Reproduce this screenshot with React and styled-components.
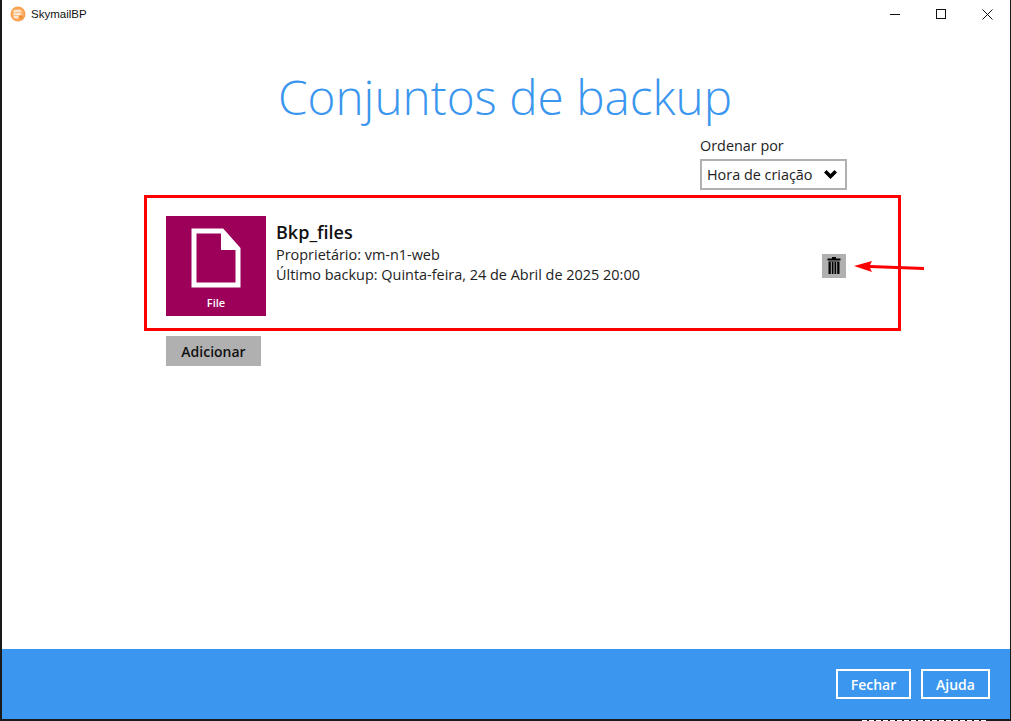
import React from "react";
import styled, { createGlobalStyle } from "styled-components";

const GlobalStyle = createGlobalStyle`
  html, body {
    margin: 0;
    padding: 0;
    background: #fff;
  }
  * {
    box-sizing: border-box;
  }
`;

const Win = styled.div`
  width: 1011px;
  height: 721px;
  display: flex;
  flex-direction: column;
  background: #fff;
  border-left: 2px solid #1a1a1a;
  border-right: 1px solid #1a1a1a;
  border-bottom: 2px solid #1a1a1a;
  font-family: "Open Sans", sans-serif;
  color: #222;
`;

const TitleBar = styled.div`
  height: 28px;
  flex: none;
  display: flex;
  align-items: center;
  padding-left: 8px;
  font-family: "Liberation Sans", sans-serif;
  font-size: 11.5px;
  color: #111;
`;

const AppName = styled.span`
  margin-left: 5px;
  flex: 1;
`;

const WinButton = styled.div`
  width: 46px;
  height: 28px;
  display: flex;
  align-items: center;
  justify-content: center;
`;

const Main = styled.div`
  flex: 1;
  display: flex;
  flex-direction: column;
  padding: 0 108px 0 142px;
  position: relative;
`;

const Title = styled.h1`
  margin: 34px 0 0 -142px;
  width: 1006px;
  text-align: center;
  font-size: 47.7px;
  line-height: 70px;
  font-weight: 300;
  color: #3a96ee;
`;

const SortBlock = styled.div`
  align-self: flex-end;
  width: 147px;
  margin: 4px 55px 0 0;
`;

const SortLabel = styled.div`
  font-size: 14.4px;
  line-height: 19px;
`;

const Select = styled.div`
  margin-top: 4px;
  height: 31px;
  border: 2px solid #b0b0b0;
  display: flex;
  align-items: center;
  justify-content: space-between;
  padding: 0 8px 0 5px;
  font-size: 14.4px;
`;

const SetCard = styled.div`
  width: 757px;
  height: 136px;
  margin-top: 5px;
  border: 3px solid #fe0000;
  display: flex;
  align-items: center;
  padding: 6px 19px 0;
`;

const TypeTile = styled.div`
  width: 100px;
  height: 100px;
  flex: none;
  background: #9c0059;
  display: flex;
  flex-direction: column;
  align-items: center;
  padding-top: 12px;
  color: #fff;
  font-size: 11px;
  font-weight: 600;
`;

const TileLabel = styled.div`
  margin-top: 8px;
  line-height: 14px;
`;

const SetInfo = styled.div`
  margin-left: 10px;
  flex: 1;
  align-self: flex-start;
  padding-top: 16px;
`;

const SetName = styled.div`
  font-size: 18px;
  font-weight: 600;
  line-height: 24px;
  margin-bottom: 1px;
  color: #111;
`;

const SetLine = styled.div`
  font-size: 14.45px;
  line-height: 20px;
`;

const TrashButton = styled.div`
  width: 24px;
  height: 24px;
  margin-right: 33px;
  margin-top: -1px;
  background: #b0b0b0;
  display: flex;
  align-items: center;
  justify-content: center;
`;

const AddButton = styled.div`
  width: 95px;
  height: 30px;
  margin: 5px 0 0 22px;
  background: #b0b0b0;
  display: flex;
  align-items: center;
  justify-content: center;
  font-size: 14px;
  font-weight: 600;
  color: #111;
`;

const Arrow = styled.svg`
  position: absolute;
  left: 852px;
  top: 230px;
`;

const Footer = styled.div`
  height: 70px;
  flex: none;
  background: #3a96ee;
  display: flex;
  align-items: flex-start;
  justify-content: flex-end;
  gap: 10px;
  padding: 20px 20px 0 0;
  position: relative;
  /* bits of a window behind, showing through on the last pixel row */
  &::after {
    content: "";
    position: absolute;
    left: 860px;
    top: 71px;
    width: 125px;
    height: 1px;
    background: repeating-linear-gradient(90deg, #fff 0 5px, #1a1a1a 5px 7px);
  }
`;

const FooterButton = styled.div`
  width: ${(p) => p.$w}px;
  height: 30px;
  border: 2px solid #fff;
  display: flex;
  align-items: center;
  justify-content: center;
  color: #fff;
  font-size: 14px;
  font-weight: 600;
`;

const AppIcon = () => (
  <svg width="16" height="16" viewBox="0 0 16 16">
    <circle cx="8" cy="8" r="7.5" fill="#f9a04c" />
    <circle cx="8" cy="8" r="5.6" fill="#fbb678" />
    <rect x="3.5" y="4" width="7.5" height="2.2" rx="0.8" fill="#fde6d0" />
    <rect x="3.5" y="7" width="7.5" height="2.2" rx="0.8" fill="#fde6d0" />
    <rect x="3.5" y="10" width="5" height="2.2" rx="0.8" fill="#fde6d0" />
    <rect x="9" y="9.5" width="3.5" height="3" rx="0.6" fill="#ef8a2e" />
  </svg>
);

const FileIcon = () => (
  <svg width="50" height="60" viewBox="0 0 50 60">
    <path d="M3 3H31L47 21V57H3Z" fill="none" stroke="#fff" strokeWidth="5" />
    <path d="M30 2V22H48V19L33 2Z" fill="#fff" />
  </svg>
);

const TrashIcon = () => (
  <svg width="14" height="17" viewBox="0 0 14 17">
    <path d="M5 0H9V1.5H13.5V3.5H.5V1.5H5Z M1.5 4.5H12.5V17H1.5Z" fill="#000" />
    <path d="M4.3 5V17M7 5V17M9.7 5V17" stroke="#b0b0b0" strokeWidth="1" />
  </svg>
);

const App = () => {
  return (
    <>
      <GlobalStyle />
      <Win>
        <TitleBar>
          <AppIcon />
          <AppName>SkymailBP</AppName>
          <WinButton>
            <svg width="10" height="10" viewBox="0 0 10 10">
              <path d="M0 5.5H10" stroke="#111" />
            </svg>
          </WinButton>
          <WinButton>
            <svg width="10" height="10" viewBox="0 0 10 10">
              <rect x="0.5" y="0.5" width="9" height="9" fill="none" stroke="#111" />
            </svg>
          </WinButton>
          <WinButton>
            <svg width="11" height="11" viewBox="0 0 11 11">
              <path d="M.5 .5L10.5 10.5M10.5 .5L.5 10.5" stroke="#111" />
            </svg>
          </WinButton>
        </TitleBar>
        <Main>
          <Title>Conjuntos de backup</Title>
          <SortBlock>
            <SortLabel>Ordenar por</SortLabel>
            <Select>
              Hora de criação
              <svg width="13" height="9" viewBox="0 0 13 9">
                <path d="M0 2.5L2.5 0L6.5 4L10.5 0L13 2.5L6.5 9Z" fill="#000" />
              </svg>
            </Select>
          </SortBlock>
          <SetCard>
            <TypeTile>
              <FileIcon />
              <TileLabel>File</TileLabel>
            </TypeTile>
            <SetInfo>
              <SetName>Bkp_files</SetName>
              <SetLine>Proprietário: vm-n1-web</SetLine>
              <SetLine>Último backup: Quinta-feira, 24 de Abril de 2025 20:00</SetLine>
            </SetInfo>
            <TrashButton>
              <TrashIcon />
            </TrashButton>
          </SetCard>
          <AddButton>Adicionar</AddButton>
          <Arrow width="72" height="16" viewBox="0 0 72 16">
            <path d="M0 8L18 3L16 7L70 9V12L16 10L18 14Z" fill="#fe0000" />
          </Arrow>
        </Main>
        <Footer>
          <FooterButton $w={75}>Fechar</FooterButton>
          <FooterButton $w={69}>Ajuda</FooterButton>
        </Footer>
      </Win>
    </>
  );
};

export default App;
